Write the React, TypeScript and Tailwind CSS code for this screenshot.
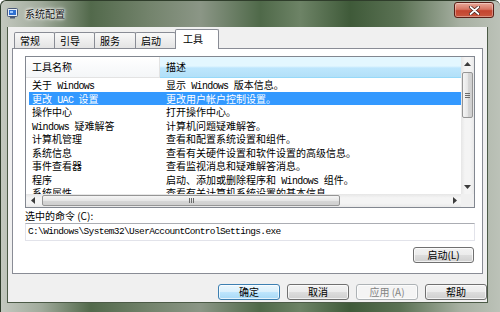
import React from "react";

const cjk = "font-['Noto_Sans_CJK_SC','Noto_Sans',sans-serif]";
const mono = "font-['Liberation_Mono','Noto_Sans_CJK_SC',monospace]";

type Row = [string, string];

const rows: Row[] = [
  ["关于 Windows", "显示 Windows 版本信息。"],
  ["更改 UAC 设置", "更改用户帐户控制设置。"],
  ["操作中心", "打开操作中心。"],
  ["Windows 疑难解答", "计算机问题疑难解答。"],
  ["计算机管理", "查看和配置系统设置和组件。"],
  ["系统信息", "查看有关硬件设置和软件设置的高级信息。"],
  ["事件查看器", "查看监视消息和疑难解答消息。"],
  ["程序", "启动、添加或删除程序和 Windows 组件。"],
  ["系统属性", "查看有关计算机系统设置的基本信息。"],
];

const tabs = ["常规", "引导", "服务", "启动"];

// latin words in the list use the bitmap-ish mono look
function Mixed({ text }: { text: string }) {
  return (
    <>
      {text.split(/( ?[A-Za-z]+ ?)/).map((p, i) =>
        /[A-Za-z]/.test(p) ? (
          <span key={i} className={`${mono} text-[10px] tracking-[-0.7px]`}>
            {p}
          </span>
        ) : (
          <span key={i}>{p}</span>
        ),
      )}
    </>
  );
}

function Arrow({ dir }: { dir: "up" | "down" | "left" | "right" }) {
  if (dir === "up")
    return (
      <svg width="7" height="4" viewBox="0 0 7 4">
        <polygon points="0,4 3.5,0 7,4" fill="#3c3c3c" />
      </svg>
    );
  if (dir === "down")
    return (
      <svg width="7" height="4" viewBox="0 0 7 4">
        <polygon points="0,0 3.5,4 7,0" fill="#3c3c3c" />
      </svg>
    );
  if (dir === "left")
    return (
      <svg width="4" height="7" viewBox="0 0 4 7">
        <polygon points="4,0 0,3.5 4,7" fill="#3c3c3c" />
      </svg>
    );
  return (
    <svg width="4" height="7" viewBox="0 0 4 7">
      <polygon points="0,0 4,3.5 0,7" fill="#3c3c3c" />
    </svg>
  );
}

function AppIcon() {
  return (
    <svg width="11" height="11" viewBox="0 0 11 11">
      <rect x="0.5" y="0.5" width="10" height="8" rx="1" fill="#e8eef5" stroke="#4a5a78" />
      <rect x="2" y="2" width="7" height="5" fill="#2f6fd0" />
      <rect x="3" y="3" width="3" height="2" fill="#9cc8ff" />
      <rect x="3" y="9" width="5" height="1.5" fill="#4a5a78" />
    </svg>
  );
}

function Btn({
  children,
  kind = "normal",
  className = "",
}: {
  children: React.ReactNode;
  kind?: "normal" | "default" | "disabled";
  className?: string;
}) {
  const look =
    kind === "default"
      ? "border-[#3c7fb1] bg-[linear-gradient(#eaf6fd_0%,#d9f0fc_50%,#bee6fd_51%,#a7d9f5_100%)] text-black"
      : kind === "disabled"
        ? "border-[#adb2b5] bg-[#f4f4f4] text-[#838383]"
        : "border-[#707070] bg-[linear-gradient(#f2f2f2_0%,#ebebeb_50%,#dddddd_51%,#cfcfcf_100%)] text-black";
  return (
    <div
      className={`h-[16px] border rounded-[3px] shadow-[inset_0_0_0_1px_rgba(255,255,255,0.7)] flex items-center justify-center text-[10px] leading-[14px] ${look} ${className}`}
    >
      {children}
    </div>
  );
}

function VScroll() {
  return (
    <div className="w-[13px] h-[137px] bg-[linear-gradient(90deg,#e6e6e6,#f4f4f4_30%,#f4f4f4_70%,#e9e9e9)] flex flex-col">
      <div className="h-[14px] flex items-center justify-center">
        <Arrow dir="up" />
      </div>
      <div className="mt-[1px] mx-[1px] h-[46px] border border-[#959595] rounded-[2px] bg-[linear-gradient(90deg,#f5f5f5,#e6e6e6_50%,#d6d6d6_51%,#cfcfcf)] flex flex-col items-center justify-center gap-[1px]">
        <div className="w-[5px] h-px bg-[#6b6b6b]" />
        <div className="w-[5px] h-px bg-[#6b6b6b]" />
        <div className="w-[5px] h-px bg-[#6b6b6b]" />
      </div>
      <div className="flex-1" />
      <div className="h-[14px] flex items-center justify-center">
        <Arrow dir="down" />
      </div>
    </div>
  );
}

function HScroll() {
  return (
    <div className="flex h-[13px]">
      <div className="w-[435px] bg-[linear-gradient(#e6e6e6,#f4f4f4_30%,#f4f4f4_70%,#e9e9e9)] flex items-center">
        <div className="w-[13px] flex items-center justify-center">
          <Arrow dir="left" />
        </div>
        <div className="ml-[3px] w-[298px] h-[11px] border border-[#959595] rounded-[2px] bg-[linear-gradient(#f5f5f5,#e6e6e6_50%,#d6d6d6_51%,#cfcfcf)] flex items-center justify-center gap-[1px]">
          <div className="w-px h-[5px] bg-[#6b6b6b]" />
          <div className="w-px h-[5px] bg-[#6b6b6b]" />
          <div className="w-px h-[5px] bg-[#6b6b6b]" />
        </div>
        <div className="flex-1" />
        <div className="w-[13px] flex items-center justify-center">
          <Arrow dir="right" />
        </div>
      </div>
      <div className="w-[13px] bg-[#f0f0f0]" />
    </div>
  );
}

export default function App() {
  return (
    <div
      className={`w-[500px] h-[312px] overflow-hidden flex flex-col rounded-t-[6px] border-l border-t border-[#2f3d2b] bg-[linear-gradient(90deg,#c3c8bf_0%,#a1ab9c_8%,#52694b_18%,#74846d_30%,#8b9686_40%,#4f6949_52%,#6d8366_60%,#3f5a39_70%,#5b7254_80%,#a7b0a2_92%,#bcc2b8_100%)] ${cjk} text-[10px] text-black`}
    >
      {/* title bar */}
      <div className="h-[26px] shrink-0 flex items-start">
        <div className="ml-[6px] mt-[7px]">
          <AppIcon />
        </div>
        <div className="ml-[7px] mt-[6px] leading-[14px] text-[10px] text-[#111] [text-shadow:0_0_5px_#fff,0_0_3px_#fff,0_0_2px_#fff]">
          系统配置
        </div>
        <div className="ml-auto mr-[6px] mt-[1px] w-[40px] h-[16px] rounded-[3px] border border-[#5a1e16] bg-[linear-gradient(#e9a999_0%,#d67562_45%,#c4442f_55%,#c9573f_100%)] shadow-[inset_0_0_0_1px_rgba(255,255,255,0.35)] flex items-center justify-center">
          <svg width="11" height="9" viewBox="0 0 11 9">
            <path d="M1.5 1 L9.5 8 M9.5 1 L1.5 8" stroke="#3a1a14" strokeWidth="3.2" strokeLinecap="round" />
            <path d="M1.5 1 L9.5 8 M9.5 1 L1.5 8" stroke="#ffffff" strokeWidth="1.8" strokeLinecap="round" />
          </svg>
        </div>
      </div>

      <div className="flex pl-[6px]">
        <div className="w-[481px] h-[276px] bg-[#f0f0f0] border-x border-b border-[#4b5a46] flex flex-col pt-[2px]">
          {/* tabs */}
          <div className="h-[19px] flex items-end pl-[6px]">
            {tabs.map((t, i) => (
              <div
                key={t}
                className={`h-[16px] ${i === 2 ? "w-[42px]" : "w-[41px]"} ${i > 0 ? "-ml-px" : ""} border-x border-t border-[#898c95] rounded-t-[2px] bg-[linear-gradient(#f8f8f8,#e4e4e4)] pl-[5px] leading-[16px] text-[10px]`}
              >
                {t}
              </div>
            ))}
            <div className="relative z-10 -ml-px -mb-px h-[20px] w-[44px] border-x border-t border-[#898c95] rounded-t-[2px] bg-white pl-[7px] pt-[2px] leading-[14px] text-[10px]">
              工具
            </div>
          </div>

          {/* tab page */}
          <div className="ml-[4px] w-[471px] h-[226px] border border-[#898c95] bg-white pt-[7px] pl-[12px]">
            <div className="w-[450px] flex flex-col">
              <div className="w-[450px] h-[152px] border border-[#828790] bg-white flex flex-col">
                <div className="flex h-[137px]">
                  <div className="w-[435px] flex flex-col overflow-hidden">
                    <div className="h-[21px] flex shrink-0 leading-[20px]">
                      <div className="w-[134px] pl-[6px] border-r border-b border-[#e3e3e3] bg-[linear-gradient(#ffffff,#f4f6f8)]">
                        工具名称
                      </div>
                      <div className="w-[301px] pl-[6px] border-b border-[#96d9f9] bg-[linear-gradient(#e3f7ff_0%,#e3f7ff_45%,#bde6fd_55%,#b2e0f8_100%)]">
                        描述
                      </div>
                    </div>
                    {rows.map(([name, desc], i) => (
                      <div
                        key={name}
                        className={`ml-[3px] h-[13.5px] leading-[13.5px] shrink-0 flex whitespace-nowrap ${i === 1 ? "bg-[#3399ff] text-white" : ""}`}
                      >
                        <div className="w-[131px] pl-[3px]">
                          <Mixed text={name} />
                        </div>
                        <div className="pl-[6px]">
                          <Mixed text={desc} />
                        </div>
                      </div>
                    ))}
                  </div>
                  <VScroll />
                </div>
                <HScroll />
              </div>

              <div className="mt-[2px] h-[12px] leading-[12px]">选中的命令 (C):</div>
              <div
                className={`mt-[1px] w-[450px] h-[18px] border border-[#e2e3ea] border-t-[#abadb3] bg-white pl-[2px] leading-[16px] ${mono} text-[9.5px] tracking-[-0.65px] whitespace-nowrap`}
              >
                C:\Windows\System32\UserAccountControlSettings.exe
              </div>
              <Btn className="mt-[6px] self-end mr-[1px] w-[61px]">启动(L)</Btn>
            </div>
          </div>

          {/* dialog buttons */}
          <div className="mt-[10px] flex justify-end gap-[7px]">
            <Btn kind="default" className="w-[62px]">
              确定
            </Btn>
            <Btn className="w-[62px]">取消</Btn>
            <Btn kind="disabled" className="w-[62px]">
              应用 (A)
            </Btn>
            <Btn className="w-[62px]">帮助</Btn>
          </div>
        </div>
      </div>
    </div>
  );
}
